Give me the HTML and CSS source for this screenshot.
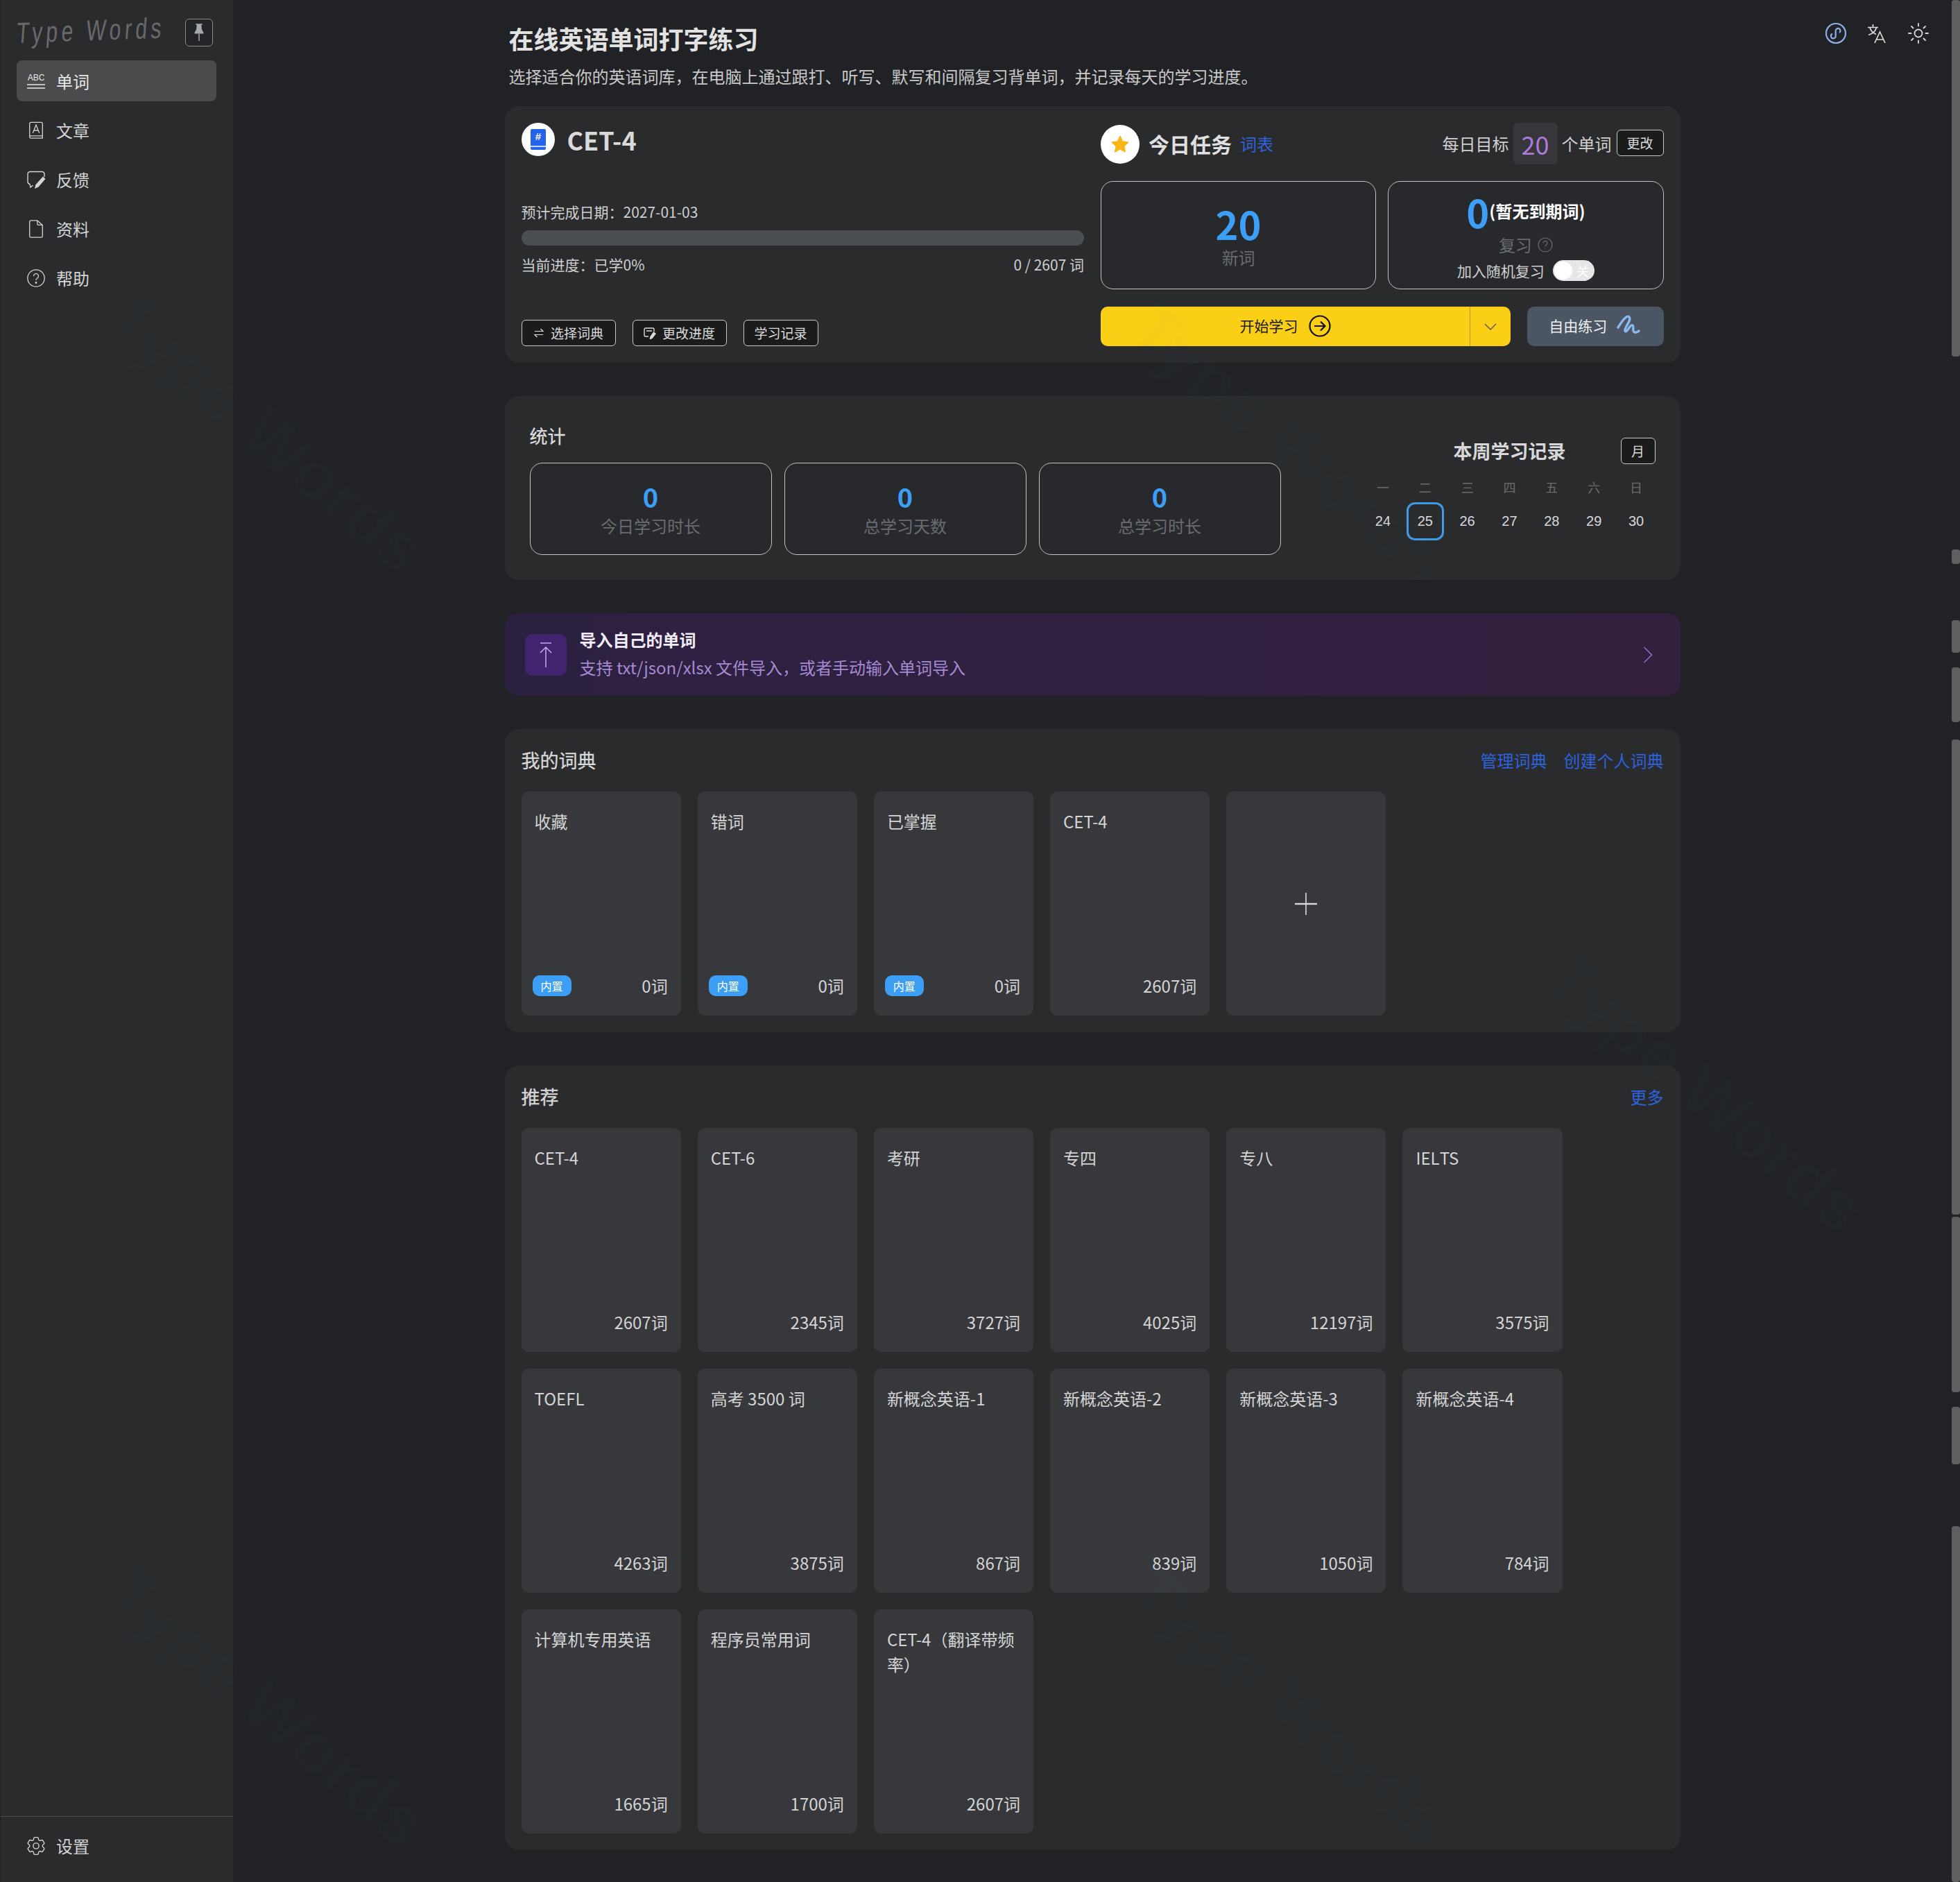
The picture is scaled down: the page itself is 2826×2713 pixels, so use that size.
FILE: index.html
```html
<!DOCTYPE html>
<html lang="zh-CN">
<head>
<meta charset="utf-8">
<title>Type Words</title>
<link rel="stylesheet" href="styles.css">
</head>
<body>
<aside class="sidebar">
  <div class="brand">
    <span class="logo">Type Words</span>
    <button class="pin">
      <svg viewBox="0 0 24 40" width="18" height="30"><path d="M5 3h14l-2.500 3 .8 8 3.400 6v2H3.300v-2l3.400-6 .8-8z" fill="#a3a8b2"/><path d="M12 22v14" stroke="#a3a8b2" stroke-width="2"/></svg>
    </button>
  </div>
  <nav class="nav">
    <a class="nav-item active">
      <svg class="nav-icon" viewBox="0 0 26 24"><text x="13" y="11" text-anchor="middle" class="abc">ABC</text><path d="M0 17h26M0 22h26" stroke="currentColor" stroke-width="1.400"/></svg>
      <span>单词</span>
    </a>
    <a class="nav-item">
      <svg class="nav-icon" viewBox="0 0 26 28" fill="none" stroke="currentColor" stroke-width="1.400"><path d="M3 22V3.500A2 2 0 0 1 5 1.500h16a2 2 0 0 1 2 2V26H5a2 2 0 0 1-2-2zM3 22.500h20"/><path d="M8 18 13 5.500 18 18M9.500 14h7"/></svg>
      <span>文章</span>
    </a>
    <a class="nav-item">
      <svg class="nav-icon" viewBox="0 0 26 26" fill="none" stroke="currentColor" stroke-width="1.400"><path d="M25 9V5a3.500 3.500 0 0 0-3.500-3.500H4.500A3.500 3.500 0 0 0 1 5v11a3.500 3.500 0 0 0 3 3.400l1 4.600 3.500-3"/><path d="M23 9.500 25.500 12 16 23l-4 1.800L13 20.500z" fill="currentColor"/></svg>
      <span>反馈</span>
    </a>
    <a class="nav-item">
      <svg class="nav-icon" viewBox="0 0 26 28" fill="none" stroke="currentColor" stroke-width="1.400"><path d="M15 1H5a2 2 0 0 0-2 2v22a2 2 0 0 0 2 2h16a2 2 0 0 0 2-2V8z"/><path d="M15 1v5a2 2 0 0 0 2 2h6"/></svg>
      <span>资料</span>
    </a>
    <a class="nav-item">
      <svg class="nav-icon" viewBox="0 0 26 26" fill="none" stroke="currentColor" stroke-width="1.300"><circle cx="13" cy="13" r="12.200"/><path d="M9.500 10a3.500 3.500 0 1 1 5.300 3c-1.300.8-1.800 1.500-1.800 3"/><circle cx="13" cy="19.500" r=".8" fill="currentColor"/></svg>
      <span>帮助</span>
    </a>
  </nav>
  <div class="side-foot">
    <a class="nav-item">
      <svg class="nav-icon" viewBox="2.500 2.500 19 19" fill="none" stroke="currentColor" stroke-width="1"><path d="M9.594 3.940c.09-.542.56-.94 1.110-.94h2.593c.55 0 1.020.398 1.110.94l.213 1.281c.063.374.313.686.645.87.074.04.147.083.22.127.325.196.72.257 1.075.124l1.217-.456a1.125 1.125 0 0 1 1.370.49l1.296 2.247a1.125 1.125 0 0 1-.26 1.431l-1.003.827c-.293.241-.438.613-.43.992a7.723 7.723 0 0 1 0 .255c-.008.378.137.75.43.991l1.004.827c.424.35.534.955.26 1.430l-1.298 2.247a1.125 1.125 0 0 1-1.369.491l-1.217-.456c-.355-.133-.75-.072-1.076.124a6.470 6.470 0 0 1-.22.128c-.331.183-.581.495-.644.869l-.213 1.281c-.09.543-.56.94-1.110.94h-2.594c-.55 0-1.019-.398-1.110-.94l-.213-1.281c-.062-.374-.312-.686-.644-.87a6.520 6.520 0 0 1-.22-.127c-.325-.196-.72-.257-1.076-.124l-1.217.456a1.125 1.125 0 0 1-1.369-.49l-1.297-2.247a1.125 1.125 0 0 1 .26-1.431l1.004-.827c.292-.24.437-.613.43-.991a6.932 6.932 0 0 1 0-.255c.007-.38-.138-.751-.43-.992l-1.004-.827a1.125 1.125 0 0 1-.26-1.430l1.297-2.247a1.125 1.125 0 0 1 1.370-.491l1.216.456c.356.133.751.072 1.076-.124.072-.044.146-.086.22-.128.332-.183.582-.495.644-.869l.214-1.280Z"/><circle cx="12" cy="12" r="3"/></svg>
      <span>设置</span>
    </a>
  </div>
</aside>

<main class="main">
  <div class="top-icons">
    <svg viewBox="0 0 32 32" width="32" height="32" fill="none" stroke="#8fb0e6" stroke-width="2.200"><circle cx="16" cy="16" r="14"/><path d="M11 16.800A3.400 3.400 0 1 0 15.700 19.500V12.500A3.400 3.400 0 1 1 21 15.200"/></svg>
    <svg viewBox="0 0 30 30" width="30" height="30" fill="none" stroke="#dcdcdc" stroke-width="1.700"><path d="M1 6.500h15M8.500 2v4.500M4 6.500c1.200 5 4.500 8 9 10M13.500 6.500c-1.200 5-5 9-11.500 11M11 29l7.500-16L26 29M13.500 24h10"/></svg>
    <svg viewBox="0 0 30 30" width="30" height="30" fill="none" stroke="#dcdcdc" stroke-width="1.800" stroke-linecap="round"><circle cx="15" cy="15" r="5.500"/><path d="M15 1v3.500M15 25.500V29M1 15h3.500M25.500 15H29M5 5l2.500 2.500M22.500 22.500 25 25M25 5l-2.500 2.500M7.500 22.500 5 25"/></svg>
  </div>

  <div class="content">
    <header class="page-head">
      <h1 class="page-title">在线英语单词打字练习</h1>
      <p class="page-sub">选择适合你的英语词库，在电脑上通过跟打、听写、默写和间隔复习背单词，并记录每天的学习进度。</p>
    </header>

    <section class="panel study">
      <div class="study-left">
        <div class="dict-head">
          <span class="round-icon">
            <svg viewBox="0 0 22 30" width="22" height="30"><path d="M2 0h18a2 2 0 0 1 2 2v26a2 2 0 0 1-2 2H2a2 2 0 0 1-2-2V2a2 2 0 0 1 2-2z" fill="#2463eb"/><path d="M0 25h22" stroke="#fff" stroke-width="1.500"/><text x="11" y="16" text-anchor="middle" class="hash">#</text></svg>
          </span>
          <span class="dict-name">CET-4</span>
        </div>
        <div class="line eta">预计完成日期：2027-01-03</div>
        <div class="bar"></div>
        <div class="line progress-row"><span>当前进度：已学0%</span><span>0 / 2607 词</span></div>
        <div class="actions">
          <button class="btn btn-a">
            <svg viewBox="0 0 16 16" width="16" height="16" fill="none" stroke="currentColor" stroke-width="1.200"><path d="M2 5.500h12L10.500 2M14 10.500H2L5.500 14"/></svg>
            选择词典
          </button>
          <button class="btn btn-b">
            <svg viewBox="0 0 18 18" width="18" height="18" fill="none" stroke="currentColor" stroke-width="1.400"><path d="M15 7V4a2 2 0 0 0-2-2H3a2 2 0 0 0-2 2v8a2 2 0 0 0 2 2h4M4 6h8"/><path d="M14.500 8 17 10l-5 6.500-2.500 1 .5-3z" fill="currentColor"/></svg>
            更改进度
          </button>
          <button class="btn btn-c">学习记录</button>
        </div>
      </div>

      <div class="study-right">
        <div class="task-head">
          <span class="round-icon star">
            <svg viewBox="0 0 28 28" width="28" height="28"><path d="M14 3l3.400 7.200 7.800 1-5.700 5.400 1.500 7.900L14 20.600l-7 3.900 1.500-7.900L2.800 11.200l7.800-1z" fill="#fbb516" stroke="#fbb516" stroke-width="2" stroke-linejoin="round"/></svg>
          </span>
          <span class="task-title">今日任务</span>
          <a class="link task-link">词表</a>
          <span class="goal">每日目标</span>
          <span class="goal-num">20</span>
          <span class="goal goal-unit">个单词</span>
          <button class="btn btn-change">更改</button>
        </div>
        <div class="task-cards">
          <div class="box new-box">
            <div class="big">20</div>
            <div class="muted">新词</div>
          </div>
          <div class="box review-box">
            <div class="review-num"><span class="big">0</span><b>(暂无到期词)</b></div>
            <div class="muted review-label">复习
              <svg viewBox="0 0 22 22" width="22" height="22" fill="none" stroke="currentColor" stroke-width="1.200"><circle cx="11" cy="11" r="10"/><path d="M8 8.500a3 3 0 1 1 4.500 2.600c-1 .6-1.500 1.200-1.500 2.400M11 16v.8"/></svg>
            </div>
            <div class="random"><span>加入随机复习</span><span class="switch"><i></i><em>关</em></span></div>
          </div>
        </div>
        <div class="task-actions">
          <button class="start">
            <span class="start-main">开始学习
              <svg viewBox="0 0 32 32" width="32" height="32" fill="none" stroke="#111" stroke-width="2.200"><circle cx="16" cy="16" r="14.500"/><path d="M8 16h15M17 9.500l6.500 6.500-6.500 6.500"/></svg>
            </span>
            <span class="start-more"><svg viewBox="0 0 18 12" width="18" height="12" fill="none" stroke="#555" stroke-width="1.400"><path d="M1 2l8 8 8-8"/></svg></span>
          </button>
          <button class="free">自由练习
            <svg viewBox="0 0 36 32" width="36" height="32" fill="none" stroke="#8ab9f0" stroke-width="3.400" stroke-linecap="round" stroke-linejoin="round"><path d="M2 18C6 12 10 5 14 3c4-2 6 1 4 6-2 5-7 11-6 14 1 2 3 0 5-3 2-3 4-6 6-5 2 1 0 5 1 8 1 3 5 3 8 0"/></svg>
          </button>
        </div>
      </div>
    </section>

    <section class="panel stats">
      <div class="stats-left">
        <h2 class="stats-title">统计</h2>
        <div class="stat-cards">
          <div class="box stat"><div class="stat-num">0</div><div class="muted">今日学习时长</div></div>
          <div class="box stat"><div class="stat-num">0</div><div class="muted">总学习天数</div></div>
          <div class="box stat"><div class="stat-num">0</div><div class="muted">总学习时长</div></div>
        </div>
      </div>
      <div class="calendar">
        <div class="cal-head">
          <span class="cal-title">本周学习记录</span>
          <button class="btn btn-month">月</button>
        </div>
        <div class="cal-grid cal-week"><span>一</span><span>二</span><span>三</span><span>四</span><span>五</span><span>六</span><span>日</span></div>
        <div class="cal-grid cal-days"><span>24</span><span class="today">25</span><span>26</span><span>27</span><span>28</span><span>29</span><span>30</span></div>
      </div>
    </section>

    <section class="banner">
      <span class="banner-icon"><svg viewBox="0 0 22 36" width="22" height="36" fill="none" stroke="#c9a8f5" stroke-width="1.500"><path d="M3 1h16M11 36V8M3 15l8-8 8 8"/></svg></span>
      <div class="banner-text">
        <div class="banner-title">导入自己的单词</div>
        <div class="banner-sub">支持 txt/json/xlsx 文件导入，或者手动输入单词导入</div>
      </div>
      <svg class="banner-arrow" viewBox="0 0 14 24" width="14" height="24" fill="none" stroke="#8f6fd0" stroke-width="1.500"><path d="M1.500 1 12.500 12 1.500 23"/></svg>
    </section>

    <section class="panel dicts">
      <div class="dicts-head">
        <h2 class="dicts-title">我的词典</h2>
        <div class="links"><a class="link">管理词典</a><a class="link">创建个人词典</a></div>
      </div>
      <div class="dict-grid">
        <div class="card"><div class="card-name">收藏</div><div class="card-foot"><span class="tag">内置</span><span>0词</span></div></div>
        <div class="card"><div class="card-name">错词</div><div class="card-foot"><span class="tag">内置</span><span>0词</span></div></div>
        <div class="card"><div class="card-name">已掌握</div><div class="card-foot"><span class="tag">内置</span><span>0词</span></div></div>
        <div class="card"><div class="card-name">CET-4</div><div class="card-foot"><span>2607词</span></div></div>
        <div class="card card-add"><svg viewBox="0 0 32 32" width="32" height="32" stroke="#dcdcdc"><path d="M16 0v32" stroke-width="1.600"/><path d="M0 16h32" stroke-width="2.400"/></svg></div>
      </div>
    </section>

    <section class="panel dicts">
      <div class="dicts-head">
        <h2 class="dicts-title">推荐</h2>
        <div class="links"><a class="link">更多</a></div>
      </div>
      <div class="dict-grid">
        <div class="card"><div class="card-name">CET-4</div><div class="card-foot"><span>2607词</span></div></div>
        <div class="card"><div class="card-name">CET-6</div><div class="card-foot"><span>2345词</span></div></div>
        <div class="card"><div class="card-name">考研</div><div class="card-foot"><span>3727词</span></div></div>
        <div class="card"><div class="card-name">专四</div><div class="card-foot"><span>4025词</span></div></div>
        <div class="card"><div class="card-name">专八</div><div class="card-foot"><span>12197词</span></div></div>
        <div class="card"><div class="card-name">IELTS</div><div class="card-foot"><span>3575词</span></div></div>
        <div class="card"><div class="card-name">TOEFL</div><div class="card-foot"><span>4263词</span></div></div>
        <div class="card"><div class="card-name">高考 3500 词</div><div class="card-foot"><span>3875词</span></div></div>
        <div class="card"><div class="card-name">新概念英语-1</div><div class="card-foot"><span>867词</span></div></div>
        <div class="card"><div class="card-name">新概念英语-2</div><div class="card-foot"><span>839词</span></div></div>
        <div class="card"><div class="card-name">新概念英语-3</div><div class="card-foot"><span>1050词</span></div></div>
        <div class="card"><div class="card-name">新概念英语-4</div><div class="card-foot"><span>784词</span></div></div>
        <div class="card"><div class="card-name">计算机专用英语</div><div class="card-foot"><span>1665词</span></div></div>
        <div class="card"><div class="card-name">程序员常用词</div><div class="card-foot"><span>1700词</span></div></div>
        <div class="card"><div class="card-name">CET-4（翻译带频率）</div><div class="card-foot"><span>2607词</span></div></div>
      </div>
    </section>
  </div>

  <div class="scrollbar" aria-hidden="true">
    <i style="margin-top:0;height:514px"></i>
    <i style="margin-top:278px;height:21px"></i>
    <i style="margin-top:81px;height:47px"></i>
    <i style="margin-top:21px;height:79px"></i>
    <i style="margin-top:25px;height:685px"></i>
    <i style="margin-top:3px;height:253px"></i>
    <i style="margin-top:21px;height:83px"></i>
    <i style="margin-top:89px;height:513px"></i>
  </div>
</main>

<div class="watermarks" aria-hidden="true">
  <span class="wm wm1">Type Words</span>
  <span class="wm wm2">Type Words</span>
  <span class="wm wm3">Type Words</span>
  <span class="wm wm4">Type Words</span>
  <span class="wm wm5">Type Words</span>
</div>
</body>
</html>
```
FILE: styles.css
```css
* { box-sizing: border-box; }
html, body { height: 100%; }
body {
  margin: 0;
  display: flex;
  height: 100vh;
  overflow: hidden;
  background: #202225;
  color: #d8d8d8;
  font-family: "Noto Sans CJK SC", "Noto Sans", sans-serif;
  font-size: 24px;
  line-height: 1.5;
}
button { font: inherit; color: inherit; cursor: pointer; }
h1, h2, p { margin: 0; }
a { color: inherit; }

/* Sidebar */
.sidebar {
  width: 336px;
  flex: none;
  display: flex;
  flex-direction: column;
  background: #292b2d;
  border-left: 1px solid #1f2123;
}
.brand {
  display: flex;
  align-items: center;
  justify-content: space-between;
  height: 87px;
  padding: 8px 29px 0 23px;
}
.logo {
  flex: none;
  width: 216px;
  font-family: "Liberation Sans", sans-serif;
  font-size: 42px;
  line-height: 46px;
  letter-spacing: 7.400px;
  white-space: nowrap;
  color: #68696b;
  transform-origin: left center;
  transform: rotate(-2deg) skewX(-6deg) scaleX(.72);
}
.pin {
  width: 40px;
  height: 40px;
  padding: 0;
  margin-top: -2px;
  display: flex;
  align-items: center;
  justify-content: center;
  background: #222427;
  border: 1px solid #8a8c90;
  border-radius: 6px;
}
.nav {
  display: flex;
  flex-direction: column;
  gap: 12px;
  padding: 0 24px 0 23px;
  flex: 1;
}
.nav-item {
  display: flex;
  align-items: center;
  gap: 16px;
  height: 59px;
  padding-left: 15px;
  border-radius: 8px;
  color: #d4d4d4;
  line-height: 36px;
}
.nav-item.active { background: #4a4b4c; color: #e8e8e8; }
.nav-icon { width: 26px; height: 26px; flex: none; }
.abc { font-family: "Liberation Sans", sans-serif; font-size: 12px; fill: currentColor; }
.side-foot {
  height: 95px;
  border-top: 1px solid #4a4b4d;
  padding: 12px 24px 0 23px;
}

/* Main */
.main {
  flex: 1;
  min-width: 0;
  position: relative;
  padding-right: 12px;
}
.top-icons {
  position: absolute;
  top: 32px;
  right: 45px;
  display: flex;
  align-items: center;
  gap: 29px;
}
.content {
  width: 1695px;
  margin: 0 auto;
  display: flex;
  flex-direction: column;
  gap: 48px;
}
.page-head {
  height: 153px;
  margin-bottom: -48px;
  padding: 30px 0 0 6px;
}
.page-title { font-size: 36px; font-weight: 700; line-height: 50px; color: #e2e2e2; }
.page-sub { font-size: 24px; line-height: 36px; margin-top: 12px; color: #c9c9c9; }

.panel { background: #292b2d; border-radius: 20px; }
.link { color: #2f62dc; }

/* Study panel */
.study { display: flex; gap: 24px; padding: 24px; height: 370px; }
.study-left, .study-right { flex: 1; min-width: 0; }
.dict-head { display: flex; align-items: center; gap: 18px; height: 48px; }
.round-icon {
  width: 48px;
  height: 48px;
  flex: none;
  display: flex;
  align-items: center;
  justify-content: center;
  border-radius: 50%;
  background: #fff;
}
.round-icon.star { width: 56px; height: 56px; margin-top: 2px; }
.hash { font-family: "Liberation Sans", sans-serif; font-size: 15px; font-weight: 700; fill: #fff; }
.dict-name { font-size: 36px; font-weight: 700; line-height: 50px; color: #d9d9d9; }
.line { font-size: 21px; line-height: 28px; color: #cfcfcf; }
.eta { margin-top: 66px; }
.bar { height: 22px; margin-top: 13px; border-radius: 11px; background: #4a4d52; }
.progress-row { display: flex; justify-content: space-between; margin-top: 13px; }
.actions { display: flex; gap: 24px; margin-top: 66px; }
.btn {
  height: 38px;
  padding: 0;
  display: inline-flex;
  align-items: center;
  justify-content: center;
  gap: 9px;
  font-size: 19px;
  line-height: 28px;
  color: #dcdcdc;
  background: #1b1b1c;
  border: 1px solid #c8c8c8;
  border-radius: 6px;
}
.btn-a, .btn-b { width: 136px; }
.btn-c { width: 108px; }
.task-head { display: flex; align-items: center; height: 60px; }
.task-title { margin-left: 13px; font-size: 30px; font-weight: 700; color: #e0e0e0; }
.task-link { margin-left: 12px; }
.goal { color: #d0d0d0; margin-left: auto; }
.goal-num {
  width: 64px;
  height: 60px;
  margin-left: 6px;
  display: flex;
  align-items: center;
  justify-content: center;
  background: #35373b;
  border-radius: 6px;
  font-size: 36px;
  color: #b078dc;
}
.goal-unit { margin-left: 6px; }
.btn-change { width: 68px; margin: -2px 0 0 7px; }
.task-cards { display: flex; gap: 17px; margin-top: 24px; }
.box {
  border: 1px solid #c4c4c4;
  border-radius: 18px;
  background: #28292c;
}
.task-cards .box {
  flex: 1;
  height: 156px;
  display: flex;
  flex-direction: column;
  align-items: center;
}
.big { font-size: 56px; font-weight: 700; line-height: 60px; color: #3c9ef5; }
.muted { color: #696c71; line-height: 36px; }
.new-box { padding-top: 30px; }
.new-box .muted { margin-top: 1px; }
.review-box { padding-top: 13px; }
.review-num { display: flex; align-items: center; height: 60px; }
.review-num b { color: #fff; font-size: 24px; margin-top: -2px; }
.review-label { display: flex; align-items: center; gap: 8px; margin-top: 1px; line-height: 34px; }
.random { display: flex; align-items: center; gap: 12px; font-size: 21px; line-height: 30px; color: #cfcfcf; margin-top: 5px; }
.switch {
  position: relative;
  width: 60px;
  height: 30px;
  border-radius: 15px;
  background: #e6e6e9;
  display: block;
}
.switch i {
  position: absolute;
  left: 2px;
  top: 2px;
  width: 26px;
  height: 26px;
  border-radius: 50%;
  background: #fff;
}
.switch em {
  position: absolute;
  right: 8px;
  top: 0;
  font-style: normal;
  font-size: 18px;
  line-height: 30px;
  color: #fff;
}
.task-actions { display: flex; gap: 24px; margin-top: 25px; }
.start {
  flex: none;
  width: 591px;
  height: 57px;
  padding: 0;
  display: flex;
  background: #facf15;
  border: 0;
  border-radius: 10px;
  color: #1a1a1a;
}
.start-main {
  flex: 1;
  display: flex;
  align-items: center;
  justify-content: center;
  gap: 15px;
  font-size: 21px;
  padding-bottom: 2px;
}
.start-more {
  width: 59px;
  display: flex;
  align-items: center;
  justify-content: center;
  border-left: 1px solid #b79c20;
}
.free {
  flex: 1;
  height: 57px;
  padding: 0 0 2px;
  display: flex;
  align-items: center;
  justify-content: center;
  gap: 14px;
  font-size: 21px;
  color: #f0f0f0;
  background: #4b5563;
  border: 0;
  border-radius: 10px;
}

/* Stats */
.stats { display: flex; justify-content: space-between; align-items: center; height: 265px; padding: 0 33px 0 36px; }
.stats-title { font-size: 26px; font-weight: 400; -webkit-text-stroke: .3px currentColor; line-height: 40px; color: #dedede; }
.stat-cards { display: flex; gap: 18px; margin-top: 19px; }
.stat {
  width: 349px;
  height: 133px;
  padding-top: 23px;
  display: flex;
  flex-direction: column;
  align-items: center;
}
.stat-num { font-size: 38px; font-weight: 700; line-height: 50px; color: #3c9ef5; }
.stat .muted { margin-top: -1px; }
.calendar { width: 426px; margin-top: 3px; }
.cal-head { display: grid; grid-template-columns: 1fr auto 1fr; align-items: center; height: 38px; }
.cal-title { grid-column: 2; font-size: 27px; font-weight: 700; color: #d8d8d8; line-height: 38px; }
.btn-month { grid-column: 3; justify-self: end; width: 50px; margin-right: 3px; }
.cal-grid { display: grid; grid-template-columns: repeat(7, 1fr); justify-items: center; align-items: center; }
.cal-week { margin-top: 20px; height: 26px; font-size: 18px; color: #6a6c70; }
.cal-days { margin-top: 9px; height: 55px; font-family: "Liberation Sans", sans-serif; font-size: 20px; color: #d8d8dc; }
.cal-days span { padding-bottom: 2px; }
.today {
  width: 54px;
  height: 55px;
  display: flex;
  align-items: center;
  justify-content: center;
  border: 3px solid #3f9be8;
  border-radius: 12px;
}

/* Banner */
.banner {
  height: 119px;
  padding: 0 40px 0 29px;
  display: flex;
  align-items: center;
  gap: 19px;
  border-radius: 20px;
  background: linear-gradient(90deg, #2c2041, #33203f);
}
.banner-icon {
  width: 60px;
  height: 60px;
  flex: none;
  display: flex;
  align-items: center;
  justify-content: center;
  border-radius: 10px;
  background: #42246e;
}
.banner-text { flex: 1; padding-bottom: 3px; }
.banner-title { font-weight: 700; line-height: 40px; color: #f2edf8; }
.banner-sub { line-height: 40px; color: #a58ad2; }

/* Dictionary panels */
.dicts { padding: 24px; }
.dicts-head { display: flex; align-items: center; justify-content: space-between; height: 44px; margin-bottom: 22px; padding-bottom: 2px; }
.dicts-title { font-size: 27px; font-weight: 400; -webkit-text-stroke: .3px currentColor; line-height: 44px; color: #d8d8d8; }
.links { display: flex; gap: 24px; }
.dict-grid { display: grid; grid-template-columns: repeat(6, 230.200px); gap: 24px; justify-content: start; }
.card {
  height: 323px;
  padding: 25px 19px 25px;
  display: flex;
  flex-direction: column;
  justify-content: space-between;
  background: #36383c;
  border-radius: 10px;
  line-height: 36px;
  color: #d4d4d4;
}
.card-foot { display: flex; justify-content: flex-end; align-items: center; }
.tag {
  width: 56px;
  height: 30px;
  margin: 0 auto -4px -3px;
  display: flex;
  align-items: center;
  justify-content: center;
  font-size: 16px;
  line-height: 30px;
  color: #fff;
  background: #3c9ef5;
  border-radius: 10px;
  position: relative;
  top: -2px;
}
.card-add { align-items: center; justify-content: center; padding: 0; }

/* Scrollbar */
.scrollbar {
  position: absolute;
  top: 0;
  right: 0;
  bottom: 0;
  width: 12px;
  overflow: hidden;
  display: flex;
  flex-direction: column;
}
.scrollbar i { display: block; flex: none; background: #5f6061; border-radius: 4px; }

/* Watermark */
.watermarks {
  position: absolute;
  inset: 0;
  overflow: hidden;
  pointer-events: none;
}
.wm {
  position: absolute;
  width: 620px;
  text-align: center;
  font-family: "Liberation Sans", sans-serif;
  font-weight: 700;
  font-size: 100px;
  line-height: 120px;
  color: rgba(125, 132, 132, .028);
  transform: rotate(40deg);
}
.wm1 { left: 75px; top: 565px; }
.wm2 { left: 1550px; top: 580px; }
.wm3 { left: 2150px; top: 1515px; }
.wm4 { left: 75px; top: 2400px; }
.wm5 { left: 1550px; top: 2400px; }
```
